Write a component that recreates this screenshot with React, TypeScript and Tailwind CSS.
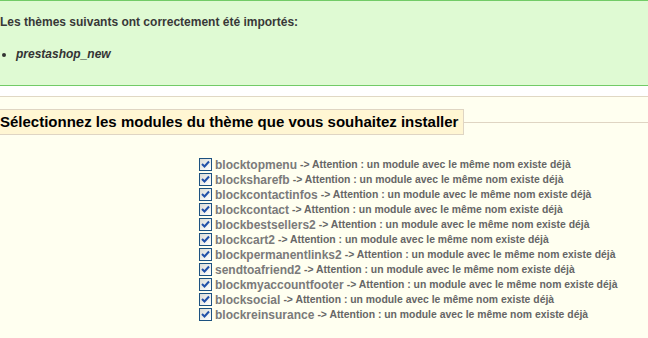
const MODULES = [
  "blocktopmenu",
  "blocksharefb",
  "blockcontactinfos",
  "blockcontact",
  "blockbestsellers2",
  "blockcart2",
  "blockpermanentlinks2",
  "sendtoafriend2",
  "blockmyaccountfooter",
  "blocksocial",
  "blockreinsurance",
];

function XpCheckbox() {
  return (
    <span className="inline-flex h-[13px] w-[13px] shrink-0 items-center justify-center border border-[#1c5180] bg-gradient-to-br from-[#dcdcd7] to-white">
      <svg width="9" height="9" viewBox="0 0 9 9">
        <path d="M1 4 L3.5 6.5 L8 1.5" fill="none" stroke="#2150a8" strokeWidth="2" />
      </svg>
    </span>
  );
}

export default function App() {
  return (
    <div className="min-h-[338px] bg-white font-['Liberation_Sans',Arial,sans-serif]">
      <div className="h-[86px] border-y border-[#72cb67] bg-[#dffad3] pt-[13px]">
        <h3 className="text-[12px] font-bold leading-[16px] text-[#383838]">
          Les thèmes suivants ont correctement été importés:
        </h3>
        <ul className="mt-[16px] list-disc pl-[16px] text-[12px] font-bold italic leading-[16px] text-[#333]">
          <li>prestashop_new</li>
        </ul>
      </div>

      <div className="mt-[10px] min-h-[242px] border-t border-[#e0d8c4] bg-[#fffff0]">
        <fieldset className="mt-[12px] border-t border-[#dfd5c3]">
          <legend className="h-[26px] border border-l-0 border-[#dfd5c3] bg-[#fff6d3] pr-[5px] text-[15px] font-bold leading-[24px] text-black">
            Sélectionnez les modules du thème que vous souhaitez installer
          </legend>
          <div className="flex flex-col pl-[199px] pt-[22px]">
            {MODULES.map((m) => (
              <label key={m} className="flex h-[15px] items-center gap-[3px]">
                <XpCheckbox />
                <span className="text-[12px] font-bold text-[#7a7a7a]">{m}</span>
                <span className="text-[10.4px] font-bold text-[#666]">
                  -&gt; Attention : un module avec le même nom existe déjà
                </span>
              </label>
            ))}
          </div>
        </fieldset>
      </div>
    </div>
  );
}
